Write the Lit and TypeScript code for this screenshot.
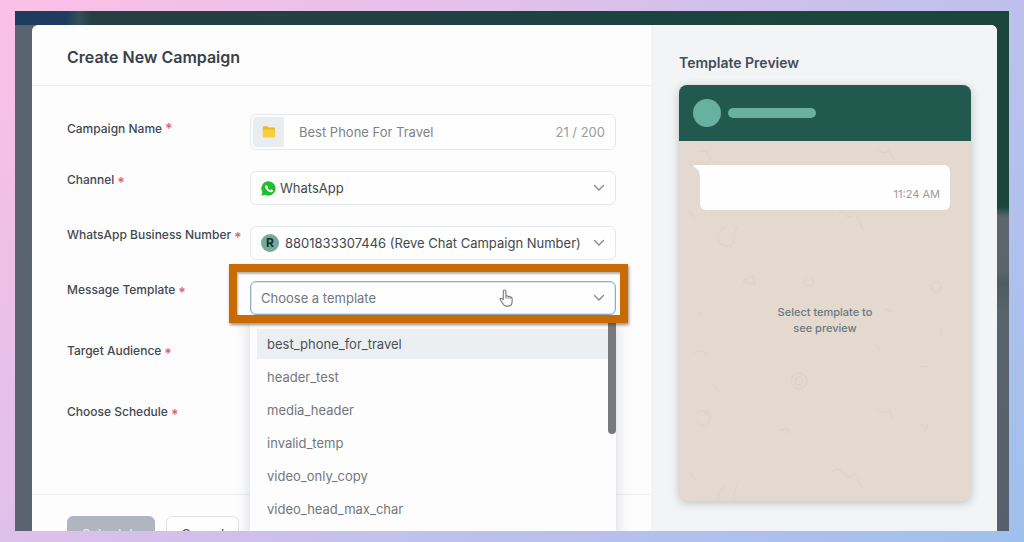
import { LitElement, html, css, svg } from "lit";
import { customElement, property, state } from "lit/decorators.js";

const chevron = html`<svg class="chevron" width="12" height="8" viewBox="0 0 12 8" aria-hidden="true">
  <path d="M1.5 1.5 6 6l4.5-4.5" fill="none" stroke="#84888c" stroke-width="1.3" stroke-linecap="round" stroke-linejoin="round" />
</svg>`;

const folder = html`<svg width="14" height="14" viewBox="0 0 14 14" aria-hidden="true">
  <path d="M0.8 2.2a1 1 0 0 1 1-1h3.4l1.3 1.3h5.6a1 1 0 0 1 1 1v4H0.8z" fill="#f0b429" />
  <path d="M0.8 4.6h11.3a1.1 1.1 0 0 1 1.1 1.1v5.7a1.1 1.1 0 0 1-1.1 1.1H1.9a1.1 1.1 0 0 1-1.1-1.1z" fill="#fbcf3b" />
</svg>`;

const whatsapp = html`<svg width="15" height="15" viewBox="0 0 24 24" aria-hidden="true">
  <path d="M12 .5A11.4 11.4 0 0 0 2.2 17.7L.6 23.5l6-1.5A11.4 11.4 0 1 0 12 .5z" fill="#1fbe2c" />
  <path
    d="M9 7.200c-.2-.5-.4-.5-.7-.5-.8 0-1.800.9-1.800 2.400s1.200 3 1.300 3.200c.2.2 2.200 3.500 5.400 4.700 2.700 1.000 3.200.8 3.800.8.6-.1 1.800-.8 2.100-1.500.3-.8.3-1.400.2-1.500-.1-.2-.3-.3-.6-.4l-2-1c-.3-.1-.5-.1-.7.2l-.9 1.100c-.2.200-.3.200-.7.100-.3-.2-1.200-.5-2.300-1.500-.9-.8-1.500-1.700-1.600-2-.2-.3 0-.5.200-.6l.7-1.000c.1-.2.100-.4 0-.6z"
    fill="#fff"
  />
</svg>`;

const pointer = html`<svg class="pointer" width="14" height="18" viewBox="0 0 14 18" aria-hidden="true">
  <path
    d="M4.300 10.500V2.300a1.300 1.300 0 0 1 2.600 0v4.900c.5-.8 1.900-.6 2.200.4.6-.6 1.800-.3 2.100.6.7-.4 1.900 0 1.900 1.200v3.200c0 2.600-1.600 4.500-4.200 4.500H7.600c-1.600 0-2.700-.8-3.500-2.200L1.200 10.800c-.5-1 .8-2 1.700-1.200z"
    fill="#fff" stroke="#74797d" stroke-width="1.100" stroke-linejoin="round"
  />
  <path d="M6.900 7.400v2.200M9.100 7.800v1.900M11.200 8.500v1.500" stroke="#74797d" stroke-width="1" fill="none" />
</svg>`;

const doodle = svg`
  <g fill="none" stroke="#cfc6ba" stroke-width="1" stroke-linecap="round" opacity=".4">
    <path d="M18 12c6-5 14-1 13 6s-10 9-13 3M27 14l3-5M100 30l8-3 3 6M198 8c3 4 9 5 12 1l4 8M240 24h9l-3 6" />
    <path d="M46 86c-6 3-10 12-4 17s14 1 13-6M55 94l3-9M10 70l6 8" />
    <path d="M152 72q6-8 12 0t12 0M178 76l6 12M128 136c-5 3-3 9 2 9s6-5 3-8M64 140l10-6 2 9z" />
    <circle cx="257" cy="146" r="5" />
    <circle cx="120" cy="240" r="8" />
    <circle cx="120" cy="240" r="4" />
    <path d="M14 212q8-6 14 2M36 246l4 4M196 204l5 5M262 188v9M250 228q-6-6-12 0M206 168l8 3M20 170l2 6" />
  </g>`;

@customElement("form-label")
class FormLabel extends LitElement {
  static styles = css`
    :host {
      display: inline-flex;
      gap: 3px;
    }
    .mark {
      color: #d4677d;
      font-size: 14px;
      font-weight: 600;
      line-height: 24px;
    }
    :host([raised]) .mark {
      line-height: 18px;
    }
  `;
  render() {
    return html`<span><slot></slot></span><span class="mark" aria-hidden="true">*</span>`;
  }
}

@customElement("template-menu")
class TemplateMenu extends LitElement {
  @property({ type: Array }) items: string[] = [];
  @state() active = 0;

  static styles = css`
    :host {
      display: block;
      background: #fdfdfe;
      box-shadow: 0 4px 14px rgba(40, 50, 60, 0.2);
    }
    .menu {
      display: flex;
    }
    .list {
      flex: 1;
      display: grid;
      gap: 3px;
      padding: 11px 0 11px 7px;
    }
    .item {
      height: 30px;
      padding: 0 10px;
      border: 0;
      background: none;
      color: #74777b;
      font: 400 13px/20px Inter, sans-serif;
      text-align: left;
    }
    .item.active {
      background: #ebeff1;
      color: #4c5157;
    }
    .thumb {
      width: 8px;
      height: 116px;
      border-radius: 4px;
      background: #77797b;
    }
  `;

  render() {
    return html`<div class="menu">
      <div class="list" role="listbox" aria-label="Templates">
        ${this.items.map(
          (name, i) => html`<button
            class="item ${i === this.active ? "active" : ""}"
            role="option"
            aria-selected=${i === this.active}
            @mouseenter=${() => (this.active = i)}
          >${name}</button>`
        )}
      </div>
      <div class="thumb"></div>
    </div>`;
  }
}

@customElement("template-preview")
class TemplatePreview extends LitElement {
  static styles = css`
    :host {
      display: block;
      padding: 28px 26px 0 28px;
      background: #f2f4f6;
    }
    .title {
      margin: 0 0 12px;
      color: #454c55;
      font-size: 14px;
      font-weight: 600;
      line-height: 20px;
    }
    .phone {
      display: flex;
      flex-direction: column;
      height: 416px;
      border-radius: 8px;
      overflow: hidden;
      background: #e3d9cf;
      box-shadow: 0 2px 8px rgba(60, 80, 80, 0.3);
    }
    .bar {
      display: flex;
      align-items: center;
      gap: 7px;
      padding: 14px;
      background: #22594e;
    }
    .avatar {
      width: 28px;
      height: 28px;
      border-radius: 50%;
      background: #67b0a2;
    }
    .name {
      width: 88px;
      height: 10px;
      border-radius: 5px;
      background: #67b0a2;
    }
    .chat {
      position: relative;
      flex: 1;
      display: flex;
      flex-direction: column;
      padding: 24px 21px 0;
    }
    .pattern {
      position: absolute;
      inset: 0;
      width: 100%;
      height: 100%;
    }
    .bubble {
      position: relative;
      display: flex;
      align-items: flex-end;
      justify-content: flex-end;
      height: 45px;
      padding: 0 10px 8px;
      box-sizing: border-box;
      border-radius: 0 6px 6px 6px;
      background: #fefefe;
      color: #9a9c9f;
      font-size: 11px;
      line-height: 16px;
    }
    .tail {
      position: absolute;
      left: -7px;
      top: 0;
    }
    .hint {
      position: relative;
      margin: 94px auto 0;
      max-width: 110px;
      color: #6b7882;
      font-size: 11px;
      font-weight: 500;
      line-height: 16px;
      text-align: center;
    }
  `;

  render() {
    return html`
      <h2 class="title">Template Preview</h2>
      <div class="phone">
        <div class="bar"><span class="avatar"></span><span class="name"></span></div>
        <div class="chat">
          <svg class="pattern" aria-hidden="true">
            <defs>
              <pattern id="doodles" width="292" height="260" y="0" patternUnits="userSpaceOnUse">${doodle}</pattern>
            </defs>
            <rect width="100%" height="100%" fill="url(#doodles)" />
          </svg>
          <div class="bubble">
            <svg class="tail" width="8" height="12" viewBox="0 0 8 12" aria-hidden="true">
              <path d="M0.500 0H8v12H7C7 7 4.500 4 0.500 1z" fill="#fefefe" />
            </svg>
            <time>11:24 AM</time>
          </div>
          <p class="hint">Select template to see preview</p>
        </div>
      </div>
    `;
  }
}

@customElement("app-root")
class AppRoot extends LitElement {
  @state() templates = [
    "best_phone_for_travel",
    "header_test",
    "media_header",
    "invalid_temp",
    "video_only_copy",
    "video_head_max_char",
  ];

  static styles = css`
    :host {
      display: block;
      box-sizing: border-box;
      height: 100vh;
      padding: 11px 15px;
      overflow: hidden;
      font-family: Inter, sans-serif;
      background: linear-gradient(135deg, #fcc0e6 0%, #e2c0ea 32%, #c4c0ec 58%, #9fc0ec 100%);
    }
    .backdrop {
      box-sizing: border-box;
      height: 100%;
      padding: 14px 12px 0 17px;
      overflow: hidden;
      background:
        linear-gradient(90deg, #1c3b5f 0, #1e3e60 52px, #34505a 64px, #263f42 76px, #1f4143 50%, #1b463c 80%) 0 0 / 100% 14px no-repeat,
        linear-gradient(#1b463c 0, #1b463c 196px, #5c666c 206px, #5a6469 260px, #4c5c5e 272px, #58636a 300px, #585f6a 100%) 100% 0 / 50% 100% no-repeat,
        #5a6470;
    }
    .modal {
      display: grid;
      grid-template-columns: minmax(0, 1fr) 346px;
      min-height: 560px;
      border-radius: 6px 6px 0 0;
      overflow: hidden;
      background: #fdfdfe;
    }
    .head {
      padding: 20px 35px 16px;
      border-bottom: 1px solid #eceeef;
    }
    .heading {
      margin: 0;
      color: #3a4149;
      font-size: 16px;
      font-weight: 600;
      line-height: 24px;
    }
    .form {
      display: grid;
      gap: 21px;
      padding: 28px 35px 51px;
    }
    .row {
      display: grid;
      grid-template-columns: 183px minmax(0, 1fr);
      align-items: start;
    }
    .row.pending {
      min-height: 40px;
    }
    .row.first-pending {
      margin-top: 6px;
    }
    .label {
      height: 18px;
      color: #434950;
      font-size: 12px;
      font-weight: 500;
      line-height: 18px;
      white-space: nowrap;
    }
    .label.lowered {
      padding-top: 6px;
    }
    .field {
      position: relative;
      display: flex;
      align-items: center;
      height: 34px;
      box-sizing: border-box;
      padding: 0 10px;
      border: 1px solid #e6e9eb;
      border-radius: 6px;
      background: #fefefe;
    }
    .field.named {
      height: 36px;
      padding: 0 10px 0 2px;
    }
    .field.focused {
      border-color: #8fb0c2;
      box-shadow: inset 0 0 0 1px #dbe8ee;
    }
    .addon {
      display: grid;
      place-items: center;
      width: 31px;
      height: 30px;
      border-radius: 4px 0 0 4px;
      background: #e9edef;
    }
    .input,
    .select {
      flex: 1;
      min-width: 0;
      margin: 0;
      padding: 0;
      border: 0;
      outline: 0;
      appearance: none;
      background: none;
      font: 400 13px/20px Inter, sans-serif;
    }
    .input {
      padding-left: 15px;
      color: #808387;
    }
    .select {
      height: 30px;
      padding-left: 4px;
      color: #44484d;
    }
    .select.spaced {
      padding-left: 6px;
    }
    .select.empty {
      padding-left: 0;
      color: #74777b;
    }
    .count {
      color: #9a9c9f;
      font-size: 13px;
      line-height: 20px;
    }
    .badge {
      display: grid;
      place-items: center;
      width: 18px;
      height: 18px;
      border-radius: 50%;
      background: #76a99d;
      color: #12332c;
      font-size: 12px;
      font-weight: 700;
      line-height: 18px;
    }
    .chevron {
      pointer-events: none;
    }
    .menu {
      position: absolute;
      left: -1px;
      right: -1px;
      top: 36px;
      z-index: 1;
    }
    .callout {
      position: absolute;
      inset: -18px -13px -9px -22px;
      z-index: 2;
      border: 8px solid #c96a04;
      box-shadow: 1px 2px 3px rgba(60, 40, 20, 0.5), inset 1px 2px 2px rgba(60, 40, 20, 0.35);
      pointer-events: none;
    }
    .pointer {
      position: absolute;
      right: 102px;
      top: 7px;
      z-index: 3;
      pointer-events: none;
    }
    .foot {
      display: flex;
      gap: 11px;
      padding: 21px 35px;
      border-top: 1px solid #eceeef;
    }
    .btn {
      box-sizing: border-box;
      height: 36px;
      padding: 0 14px;
      border: 1px solid #e1e4e7;
      border-radius: 6px;
      background: #fefefe;
      color: #5d6268;
      font: 500 13px/20px Inter, sans-serif;
    }
    .btn.primary {
      border-color: #b0b6c0;
      background: #b0b6c0;
      color: #e9ebee;
    }
  `;

  render() {
    return html`
      <div class="backdrop">
        <main class="modal">
          <section>
            <header class="head"><h1 class="heading">Create New Campaign</h1></header>
            <form class="form" @submit=${(e: Event) => e.preventDefault()}>
              <div class="row">
                <label class="label lowered" for="name"><form-label raised>Campaign Name</form-label></label>
                <div class="field named">
                  <span class="addon">${folder}</span>
                  <input class="input" id="name" type="text" maxlength="200" value="Best Phone For Travel" />
                  <span class="count">21 / 200</span>
                </div>
              </div>
              <div class="row">
                <label class="label" for="channel"><form-label>Channel</form-label></label>
                <div class="field">
                  ${whatsapp}
                  <select class="select" id="channel">
                    <option>WhatsApp</option>
                  </select>
                  ${chevron}
                </div>
              </div>
              <div class="row">
                <label class="label" for="number"><form-label>WhatsApp Business Number</form-label></label>
                <div class="field">
                  <span class="badge" aria-hidden="true">R</span>
                  <select class="select spaced" id="number">
                    <option>8801833307446 (Reve Chat Campaign Number)</option>
                  </select>
                  ${chevron}
                </div>
              </div>
              <div class="row">
                <label class="label" for="template"><form-label>Message Template</form-label></label>
                <div class="field focused">
                  <select class="select empty" id="template">
                    <option>Choose a template</option>
                  </select>
                  ${chevron}
                  <template-menu class="menu" .items=${this.templates}></template-menu>
                  <div class="callout"></div>
                  ${pointer}
                </div>
              </div>
              <div class="row pending first-pending">
                <span class="label"><form-label>Target Audience</form-label></span>
              </div>
              <div class="row pending">
                <span class="label"><form-label>Choose Schedule</form-label></span>
              </div>
            </form>
            <footer class="foot">
              <button class="btn primary" type="button">Schedule</button>
              <button class="btn" type="button">Cancel</button>
            </footer>
          </section>
          <template-preview></template-preview>
        </main>
      </div>
    `;
  }
}
